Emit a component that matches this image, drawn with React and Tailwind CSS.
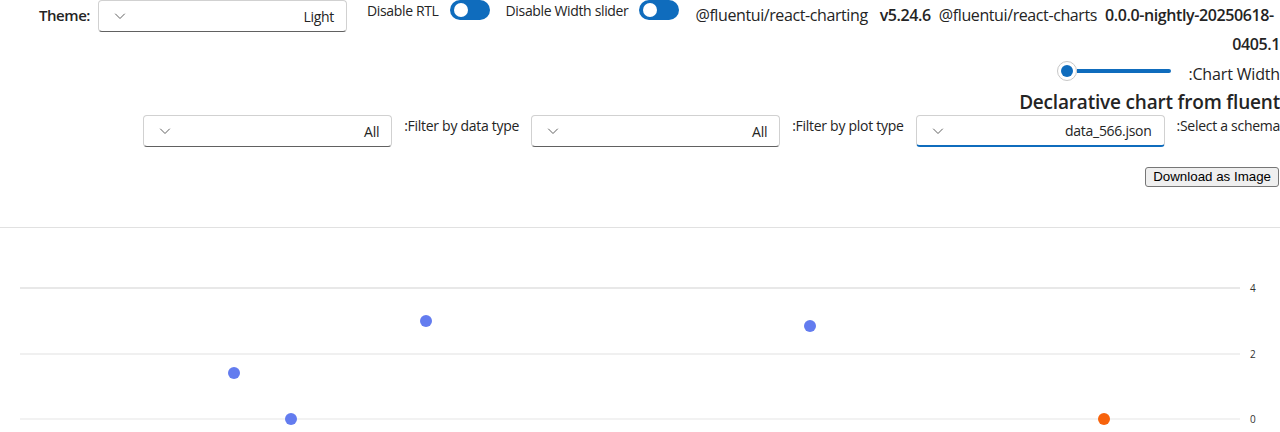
import React from "react";

const font = { fontFamily: '"Open Sans", "Noto Sans", sans-serif' };

const Chevron = () => (
  <svg width="12" height="12" viewBox="0 0 12 12" className="shrink-0">
    <path d="M1.5 4 L6 8.5 L10.5 4" fill="none" stroke="#616161" strokeWidth="1" strokeLinecap="round" strokeLinejoin="round" />
  </svg>
);

const Dropdown = ({ value, focused = false }) => (
  <div
    className={`w-[249px] h-8 shrink-0 flex items-center justify-between pl-[15px] pr-3 bg-white rounded-[4px] border border-[#d1d1d1] ${
      focused ? "border-b-2 border-b-[#0f6cbd]" : "border-b-[#616161]"
    }`}
  >
    <Chevron />
    <span className="text-[14px] text-[#242424] tracking-[-0.02em]">{value}</span>
  </div>
);

const Toggle = () => (
  <div className="w-10 h-5 shrink-0 rounded-full bg-[#0f6cbd] flex items-center pl-[4px]">
    <div className="w-[14px] h-[14px] rounded-full bg-white" />
  </div>
);

const points = [
  { x: 234, y: 373, c: "#637cef" },
  { x: 291, y: 419, c: "#637cef" },
  { x: 426, y: 321, c: "#637cef" },
  { x: 810, y: 326, c: "#637cef" },
  { x: 1104, y: 419, c: "#f7630c" },
];

const Chart = () => {
  const top = 228;
  const grid = [
    { y: 288, label: "4", color: "#d2d2d2" },
    { y: 354, label: "2", color: "#e1e1e1" },
    { y: 419, label: "0", color: "#e6e6e6" },
  ];
  return (
    <svg width="1280" height="205" className="block">
      {grid.map((g) => (
        <g key={g.label}>
          <line x1="20" x2="1240" y1={g.y - top} y2={g.y - top} stroke={g.color} strokeWidth="1.2" />
          <text x="1250" y={g.y - top + 3.5} fontSize="10" fill="#323130" style={font}>
            {g.label}
          </text>
        </g>
      ))}
      {points.map((p, i) => (
        <circle key={i} cx={p.x} cy={p.y - top} r="6" fill={p.c} />
      ))}
    </svg>
  );
};

export default function App() {
  return (
    <div className="w-[1280px] h-[432px] overflow-hidden bg-white text-[#242424]" style={font}>
      {/* top bar */}
      <div className="flex items-start h-[58px]">
        <div className="w-[98px] shrink-0 flex justify-end pr-2 pt-[4px]">
          <span className="text-[15px] font-semibold tracking-[-0.03em]">Theme:</span>
        </div>
        <Dropdown value="Light" />
        <span className="ml-[20px] shrink-0 whitespace-nowrap text-[14px] tracking-[-0.025em] leading-5 pt-[1px]">Disable RTL</span>
        <div className="ml-[11px] shrink-0">
          <Toggle />
        </div>
        <span className="ml-[16px] shrink-0 whitespace-nowrap text-[14px] tracking-[-0.025em] leading-5 pt-[1px]">Disable Width slider</span>
        <div className="ml-[11px] shrink-0">
          <Toggle />
        </div>
        <div className="ml-[16px] flex-1 min-w-0 text-[16px] tracking-[-0.025em] leading-[29px]">
          <div className="flex whitespace-nowrap pt-[1px]">
            <span>@fluentui/react-charting</span>
            <span className="ml-[12px] font-semibold">v5.24.6</span>
            <span className="ml-[8px]">@fluentui/react-charts</span>
            <span className="ml-[8px] font-semibold">0.0.0-nightly-20250618-</span>
          </div>
          <div className="text-right font-semibold">0405.1</div>
        </div>
      </div>

      {/* chart width slider */}
      <div className="flex justify-end items-center h-[26px]">
        <div className="flex items-center w-[114px]">
          <div className="w-5 h-5 rounded-full border border-[#c7c7c7] bg-white flex items-center justify-center shrink-0">
            <div className="w-[12px] h-[12px] rounded-full bg-[#0f6cbd]" />
          </div>
          <div className="flex-1 h-1 bg-[#0f6cbd] rounded-r-full" />
        </div>
        <span className="ml-[17px] text-[16px] tracking-[-0.01em] pt-[6px]">:Chart Width</span>
      </div>

      {/* heading */}
      <div className="flex justify-end h-[31px] items-end">
        <h1 className="text-[19px] font-semibold tracking-[-0.01em] leading-[26px] whitespace-nowrap">
          Declarative chart from fluent
        </h1>
      </div>

      {/* filters */}
      <div className="flex flex-row-reverse items-start gap-3 h-[52px]">
        <span className="text-[14px] tracking-[-0.02em] leading-5 pt-[1px] whitespace-nowrap">:Select a schema</span>
        <Dropdown value="data_566.json" focused />
        <span className="text-[14px] tracking-[-0.02em] leading-5 pt-[1px] whitespace-nowrap">:Filter by plot type</span>
        <Dropdown value="All" />
        <span className="text-[14px] tracking-[-0.02em] leading-5 pt-[1px] whitespace-nowrap">:Filter by data type</span>
        <Dropdown value="All" />
      </div>

      {/* download button */}
      <div className="flex justify-end pr-px h-[60px]">
        <button
          className="h-[20px] px-[7px] bg-[#efefef] border border-[#767676] rounded-[3px] text-[13.33px] leading-none text-black"
          style={{ fontFamily: '"Liberation Sans", Arial, sans-serif' }}
        >
          Download as Image
        </button>
      </div>

      <div className="h-px bg-[#e1e1e1]" />
      <Chart />
    </div>
  );
}
